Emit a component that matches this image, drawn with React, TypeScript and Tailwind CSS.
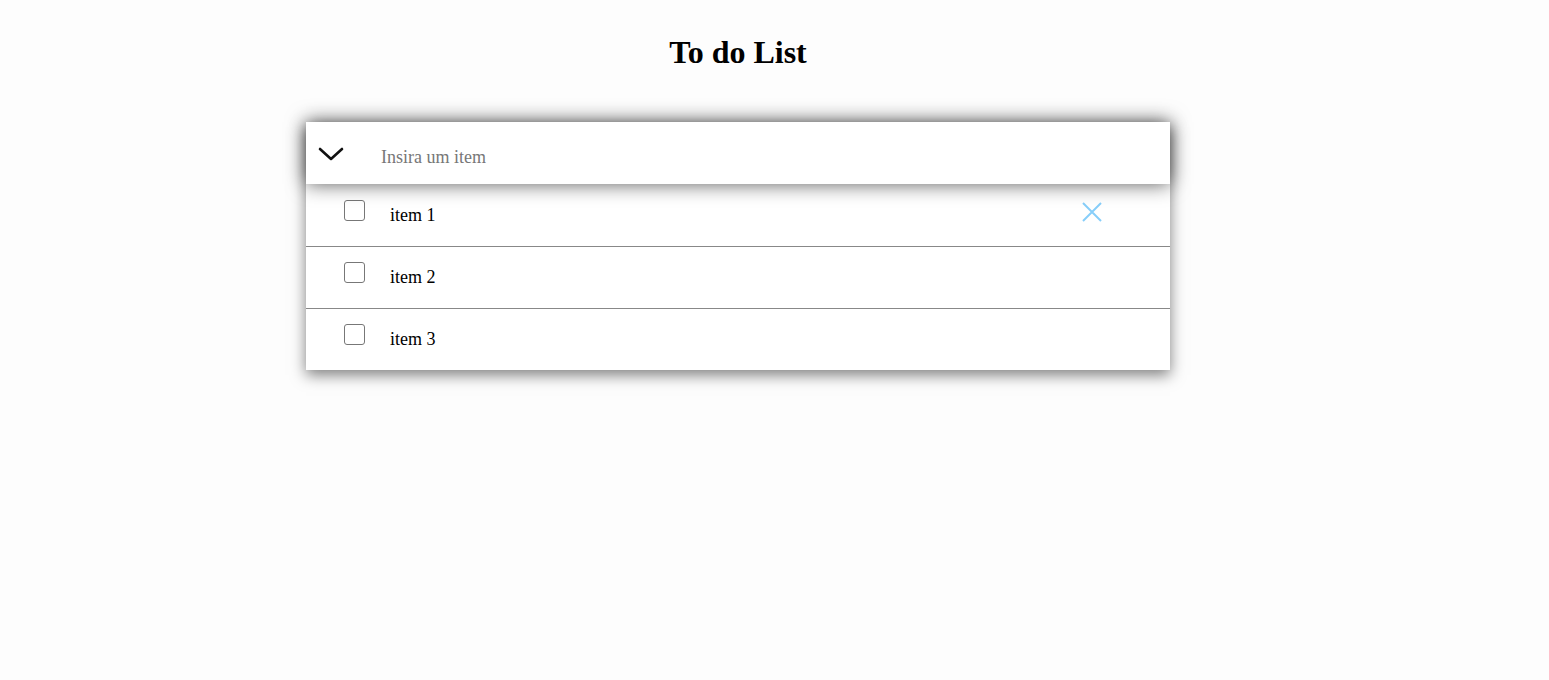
import React from "react";

const items = ["item 1", "item 2", "item 3"];

export default function App() {
  return (
    <div className="min-h-[680px] bg-[#fdfdfd]" style={{ fontFamily: '"Liberation Serif", "Times New Roman", serif' }}>
      <div className="w-[1476px] flex flex-col items-center">
        <h1 className="mt-[34px] text-[32px] leading-[37px] font-bold text-black">To do List</h1>
        <div className="mt-[51px] w-[864px] bg-white shadow-[0_5px_14px_rgba(0,0,0,0.5)]">
          <div className="relative z-10 h-[62px] flex items-center bg-white shadow-[0_0_20px_rgba(0,0,0,0.65)]">
            <svg className="ml-[12px] mt-[2px]" width="26" height="16" viewBox="0 0 26 16" fill="none">
              <path d="M2 3 L13 13 L24 3" stroke="#111" strokeWidth="2.6" strokeLinecap="round" strokeLinejoin="round" />
            </svg>
            <input
              className="ml-[37px] mt-[8px] flex-1 bg-transparent outline-none text-[18px] text-black placeholder:text-[#777]"
              style={{ fontFamily: '"Liberation Serif", "Times New Roman", serif' }}
              placeholder="Insira um item"
            />
          </div>
          {items.map((it, i) => (
            <div key={it} className={`h-[62px] flex items-center ${i > 0 ? "border-t border-[#888]" : ""}`}>
              <div className="ml-[38px] mt-[-10px] w-[21px] h-[21px] rounded-[3px] border border-[#777] bg-white" />
              <span className="ml-[25px] text-[18px] text-black">{it}</span>
              <div className="flex-1" />
              {i === 0 && (
                <svg className="mr-[67px] mt-[-6px]" width="22" height="22" viewBox="0 0 22 22">
                  <path d="M2 2 L20 20 M20 2 L2 20" stroke="#87cefa" strokeWidth="2" />
                </svg>
              )}
            </div>
          ))}
        </div>
      </div>
    </div>
  );
}
